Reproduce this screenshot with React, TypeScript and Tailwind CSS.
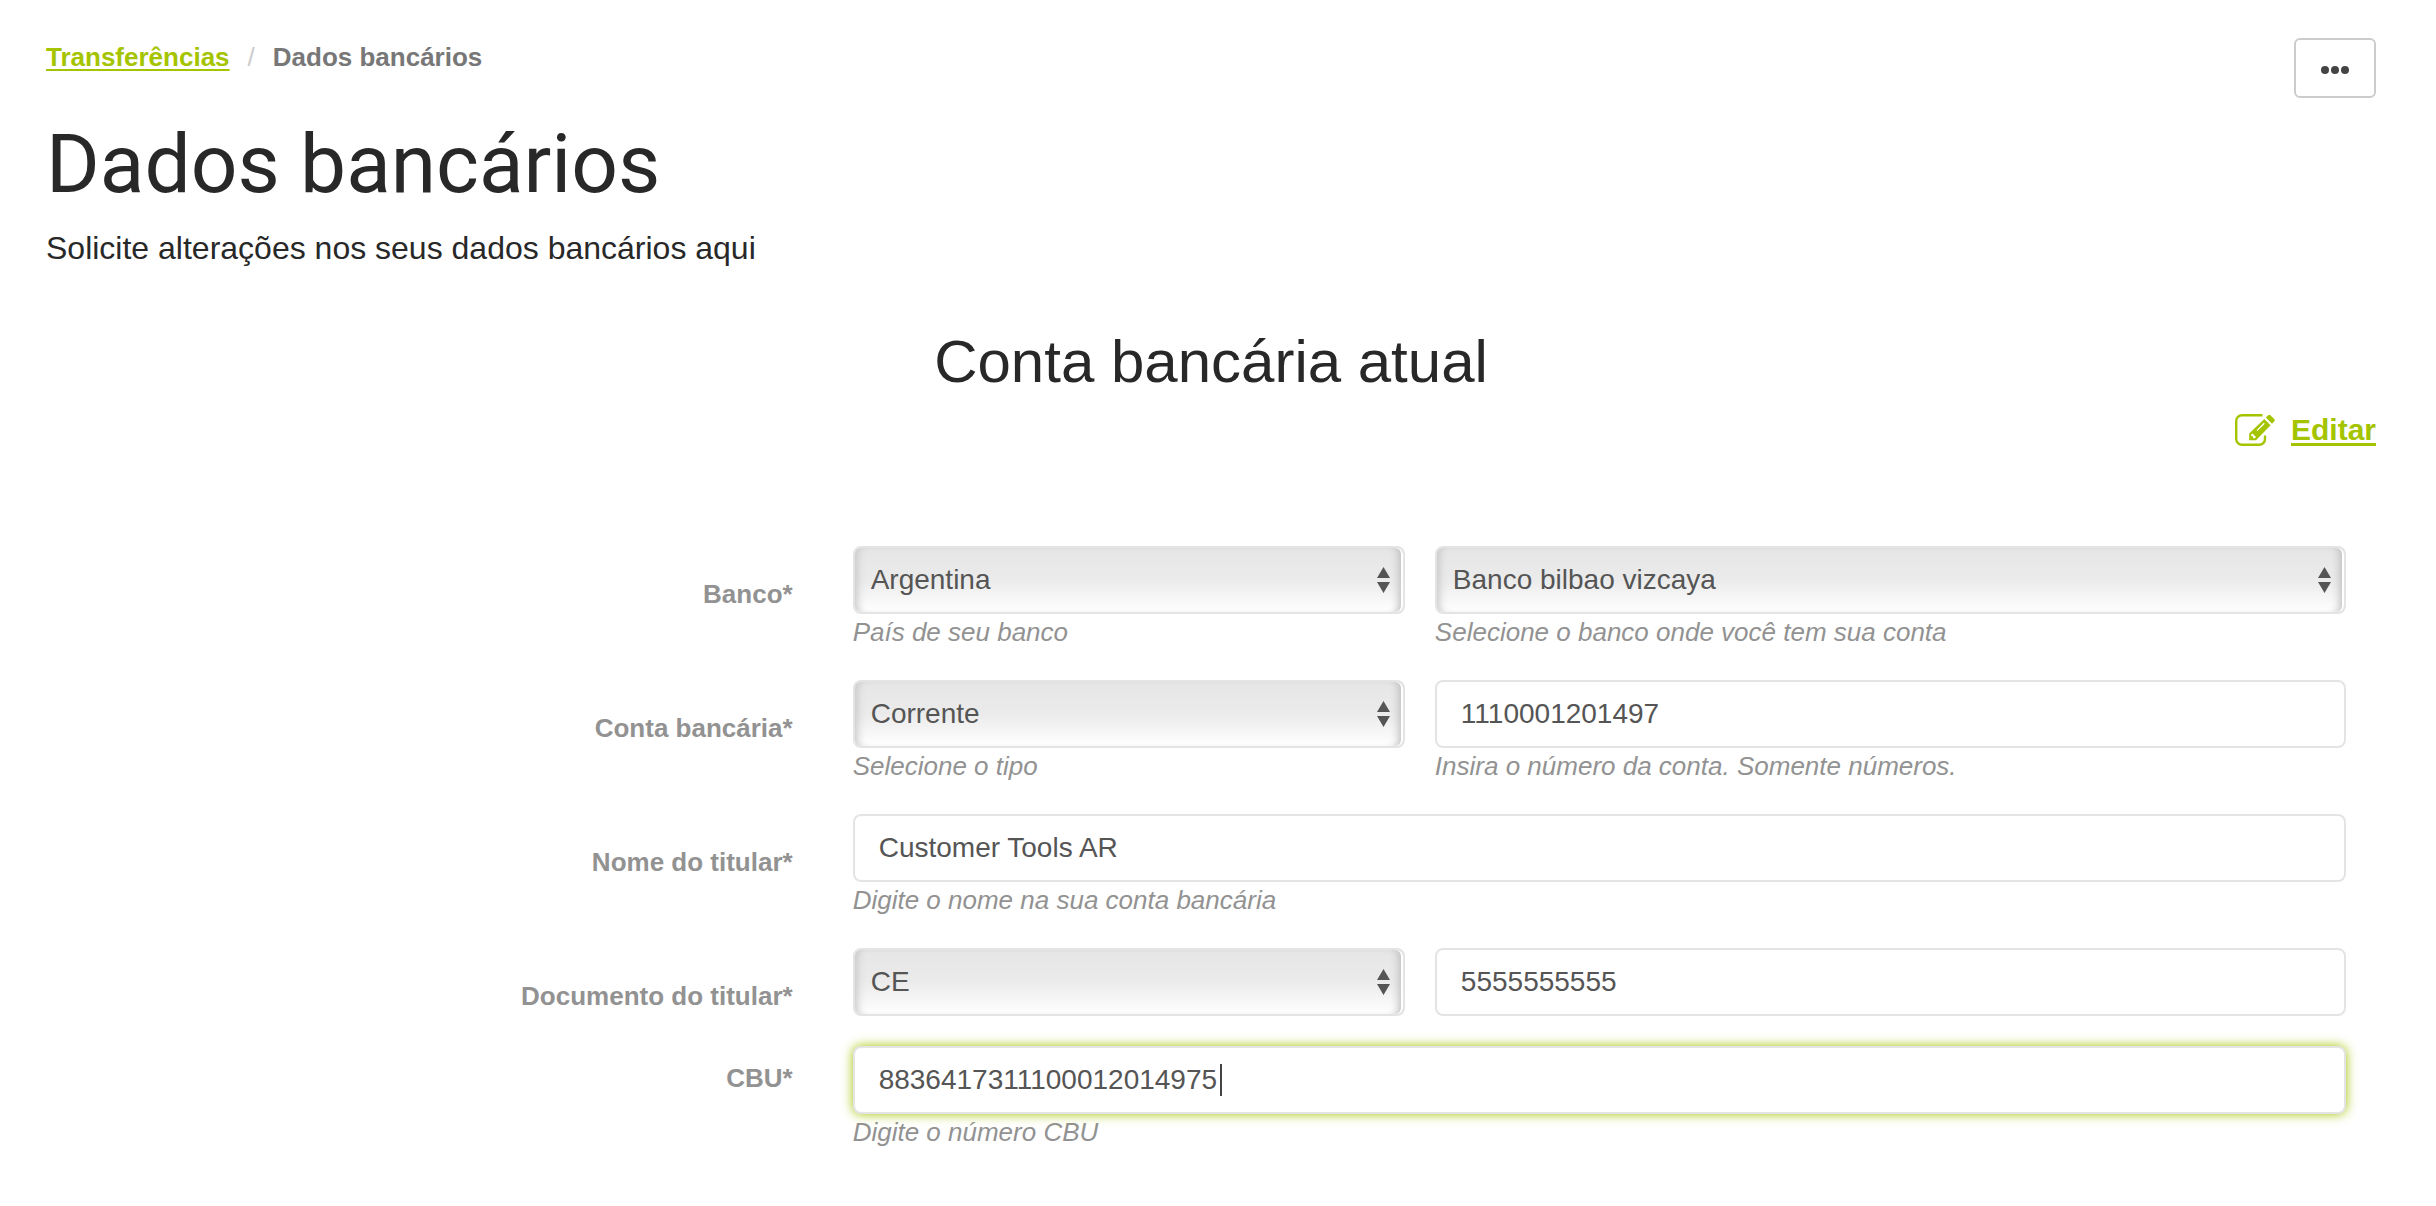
import type { ReactNode } from "react";

const controlBase =
  "block h-[68px] w-full rounded-lg border-2 border-[#e4e4e4] text-[28px] text-[#555] outline-none";

function EditIcon() {
  return (
    <svg width="40" height="32" viewBox="0 0 40 32" fill="none" aria-hidden="true">
      <path
        d="M27.5 1.2H7A5.8 5.8 0 0 0 1.2 7v18A5.8 5.8 0 0 0 7 30.8h17.2A5.8 5.8 0 0 0 30 25v-3.5"
        stroke="#a5c400"
        strokeWidth="2.4"
      />
      <path
        fillRule="evenodd"
        fill="#a5c400"
        d="M29.3 5 35.6 11.3 21 26.2H14.2V19.6ZM16.2 20.6V22.3H18V24.2H19.9L21 22.9 17.5 19.4ZM21.5 16.2 28.8 8.8 29.8 9.7 22.4 17.1Z"
      />
      <path fill="#a5c400" d="M30.8 3.6 33 1.4Q34.2.2 35.6 1.4L39.2 5Q40.4 6.3 39.2 7.6L37 9.8Z" />
    </svg>
  );
}

function Row({
  label,
  htmlFor,
  compact = false,
  children,
}: {
  label: string;
  htmlFor: string;
  compact?: boolean;
  children: ReactNode;
}) {
  return (
    <div className="grid grid-cols-[1fr_2fr] gap-[60px]">
      <label
        htmlFor={htmlFor}
        className={`text-right text-[26px] leading-8 font-bold text-[#929292] ${compact ? "pt-4" : "pt-8"}`}
      >
        {label}
      </label>
      {children}
    </div>
  );
}

function Split({ children }: { children: ReactNode }) {
  return <div className="grid grid-cols-[20fr_33fr] gap-[30px]">{children}</div>;
}

function Help({ id, children }: { id: string; children: ReactNode }) {
  return (
    <p id={id} className="pt-0.5 text-[26px] leading-8 text-[#929292] italic">
      {children}
    </p>
  );
}

function Select({ id, label, value, help }: { id: string; label: string; value: string; help?: string }) {
  return (
    <div className="min-w-0">
      <div className="relative">
        <select
          id={id}
          aria-label={label}
          aria-describedby={help ? `${id}-help` : undefined}
          defaultValue={value}
          className={`${controlBase} appearance-none bg-linear-to-b from-[#e6e6e6] via-[#ebebeb] via-50% to-white pr-12 pl-4 shadow-[inset_8px_0_8px_-6px_#c4c4c4,inset_-2px_0_0_#fff,inset_-10px_0_8px_-6px_#bbb]`}
        >
          <option>{value}</option>
        </select>
        <svg
          className="pointer-events-none absolute top-[21px] right-[15px]"
          width="13"
          height="26"
          viewBox="0 0 13 26"
          fill="#555"
          aria-hidden="true"
        >
          <path d="M6.5 0 13 11H0ZM0 15H13L6.5 26Z" />
        </svg>
      </div>
      {help && <Help id={`${id}-help`}>{help}</Help>}
    </div>
  );
}

function TextField({
  id,
  label,
  value,
  help,
  active = false,
}: {
  id: string;
  label: string;
  value: string;
  help?: string;
  active?: boolean;
}) {
  return (
    <div className="min-w-0">
      <div className="relative">
        <input
          id={id}
          type="text"
          aria-label={label}
          aria-describedby={help ? `${id}-help` : undefined}
          defaultValue={value}
          className={`${controlBase} bg-white px-6 ${active ? "shadow-[0_0_12px_#a5c400]" : ""}`}
        />
        {active && <span className="absolute top-[18px] left-[367px] h-8 w-0.5 bg-[#444]" />}
      </div>
      {help && <Help id={`${id}-help`}>{help}</Help>}
    </div>
  );
}

export default function App() {
  return (
    <main className="min-h-screen bg-white pt-[38px] pr-[60px] pb-10 pl-[46px] font-['Liberation_Sans',Arial,sans-serif] text-[#282828]">
      <header className="flex items-start justify-between">
        <div>
          <nav aria-label="Breadcrumb" className="flex gap-[18px] text-[26px] leading-[38px] font-bold">
            <a href="#transferencias" className="text-[#a5c400] underline decoration-2 underline-offset-3">
              Transferências
            </a>
            <span className="font-normal text-[#ccc]">/</span>
            <span className="text-[#777]">Dados bancários</span>
          </nav>
          <h1 className="mt-9 font-[Roboto,sans-serif] text-[82px] leading-[104px]">Dados bancários</h1>
          <p className="mt-3 text-[32px] leading-10">Solicite alterações nos seus dados bancários aqui</p>
        </div>
        <button
          type="button"
          aria-label="Mais opções"
          className="flex h-[60px] w-[82px] items-center justify-center rounded-md border-2 border-[#ccc] bg-white pt-1"
        >
          <svg width="28" height="8" viewBox="0 0 28 8" fill="#444" aria-hidden="true">
            <circle cx="4" cy="4" r="4" />
            <circle cx="14" cy="4" r="4" />
            <circle cx="24" cy="4" r="4" />
          </svg>
        </button>
      </header>

      <h2 className="mt-[58px] text-center text-[60px] leading-[72px]">Conta bancária atual</h2>
      <div className="mt-3.5 flex justify-end">
        <a href="#editar" className="flex items-center gap-4 text-[30px] leading-9 font-bold text-[#a5c400]">
          <EditIcon />
          <span className="underline decoration-[3px] underline-offset-3">Editar</span>
        </a>
      </div>

      <form className="mt-[98px] flex flex-col gap-8 pr-[30px]">
        <Row label="Banco*" htmlFor="pais">
          <Split>
            <Select id="pais" label="País" value="Argentina" help="País de seu banco" />
            <Select
              id="banco"
              label="Banco"
              value="Banco bilbao vizcaya"
              help="Selecione o banco onde você tem sua conta"
            />
          </Split>
        </Row>
        <Row label="Conta bancária*" htmlFor="tipo">
          <Split>
            <Select id="tipo" label="Tipo de conta" value="Corrente" help="Selecione o tipo" />
            <TextField
              id="conta"
              label="Número da conta"
              value="1110001201497"
              help="Insira o número da conta. Somente números."
            />
          </Split>
        </Row>
        <Row label="Nome do titular*" htmlFor="titular">
          <TextField
            id="titular"
            label="Nome do titular"
            value="Customer Tools AR"
            help="Digite o nome na sua conta bancária"
          />
        </Row>
        <div className="flex flex-col gap-[30px]">
          <Row label="Documento do titular*" htmlFor="documento">
            <Split>
              <Select id="documento" label="Tipo de documento" value="CE" />
              <TextField id="numero" label="Número do documento" value="5555555555" />
            </Split>
          </Row>
          <Row label="CBU*" htmlFor="cbu" compact>
            <TextField id="cbu" label="CBU" value="8836417311100012014975" help="Digite o número CBU" active />
          </Row>
        </div>
      </form>
    </main>
  );
}
